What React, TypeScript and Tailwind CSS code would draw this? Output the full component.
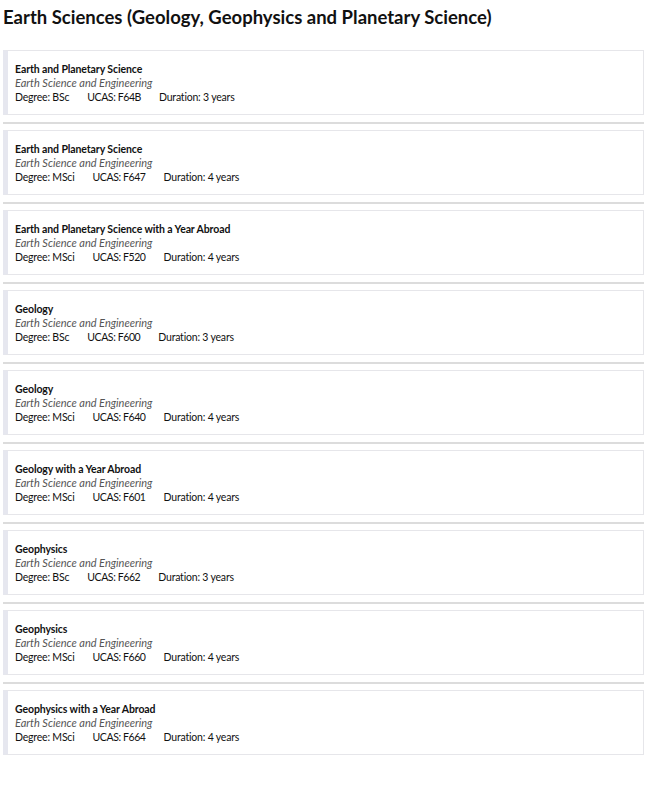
import React from 'react';

interface Course {
  title: string;
  dept: string;
  degree: string;
  ucas: string;
  duration: string;
}

const courses: Course[] = [
  { title: 'Earth and Planetary Science', dept: 'Earth Science and Engineering', degree: 'BSc', ucas: 'F64B', duration: '3 years' },
  { title: 'Earth and Planetary Science', dept: 'Earth Science and Engineering', degree: 'MSci', ucas: 'F647', duration: '4 years' },
  { title: 'Earth and Planetary Science with a Year Abroad', dept: 'Earth Science and Engineering', degree: 'MSci', ucas: 'F520', duration: '4 years' },
  { title: 'Geology', dept: 'Earth Science and Engineering', degree: 'BSc', ucas: 'F600', duration: '3 years' },
  { title: 'Geology', dept: 'Earth Science and Engineering', degree: 'MSci', ucas: 'F640', duration: '4 years' },
  { title: 'Geology with a Year Abroad', dept: 'Earth Science and Engineering', degree: 'MSci', ucas: 'F601', duration: '4 years' },
  { title: 'Geophysics', dept: 'Earth Science and Engineering', degree: 'BSc', ucas: 'F662', duration: '3 years' },
  { title: 'Geophysics', dept: 'Earth Science and Engineering', degree: 'MSci', ucas: 'F660', duration: '4 years' },
  { title: 'Geophysics with a Year Abroad', dept: 'Earth Science and Engineering', degree: 'MSci', ucas: 'F664', duration: '4 years' },
];

const CourseCard: React.FC<{ course: Course }> = ({ course }) => (
  <div className="h-[65px] border border-[#e6e6ea] border-l-[5px] border-l-[#e6e7ef] bg-white pl-[7px] pt-[11px] leading-[14px] text-[#111]">
    <div className="text-[10.5px] font-bold tracking-[-0.1px]">{course.title}</div>
    <div className="text-[11px] italic text-[#555]">{course.dept}</div>
    <div className="flex gap-[18px] text-[10.5px] tracking-[-0.2px]">
      <span>Degree: {course.degree}</span>
      <span className="tracking-[-0.4px]">UCAS: {course.ucas}</span>
      <span>Duration: {course.duration}</span>
    </div>
  </div>
);

export default function App() {
  return (
    <div className="min-h-[790px] w-[655px] bg-white px-[3px] font-['Lato',sans-serif]">
      <h1 className="pt-[5px] text-[18.5px] font-bold leading-[24px] text-[#111]">
        Earth Sciences (Geology, Geophysics and Planetary Science)
      </h1>
      <div className="mt-[21px] w-[641px]">
        {courses.map((c, i) => (
          <React.Fragment key={i}>
            {i > 0 && <div className="mb-[6px] mt-[7px] h-[2px] bg-[#dcdcdc]" />}
            <CourseCard course={c} />
          </React.Fragment>
        ))}
      </div>
    </div>
  );
}
